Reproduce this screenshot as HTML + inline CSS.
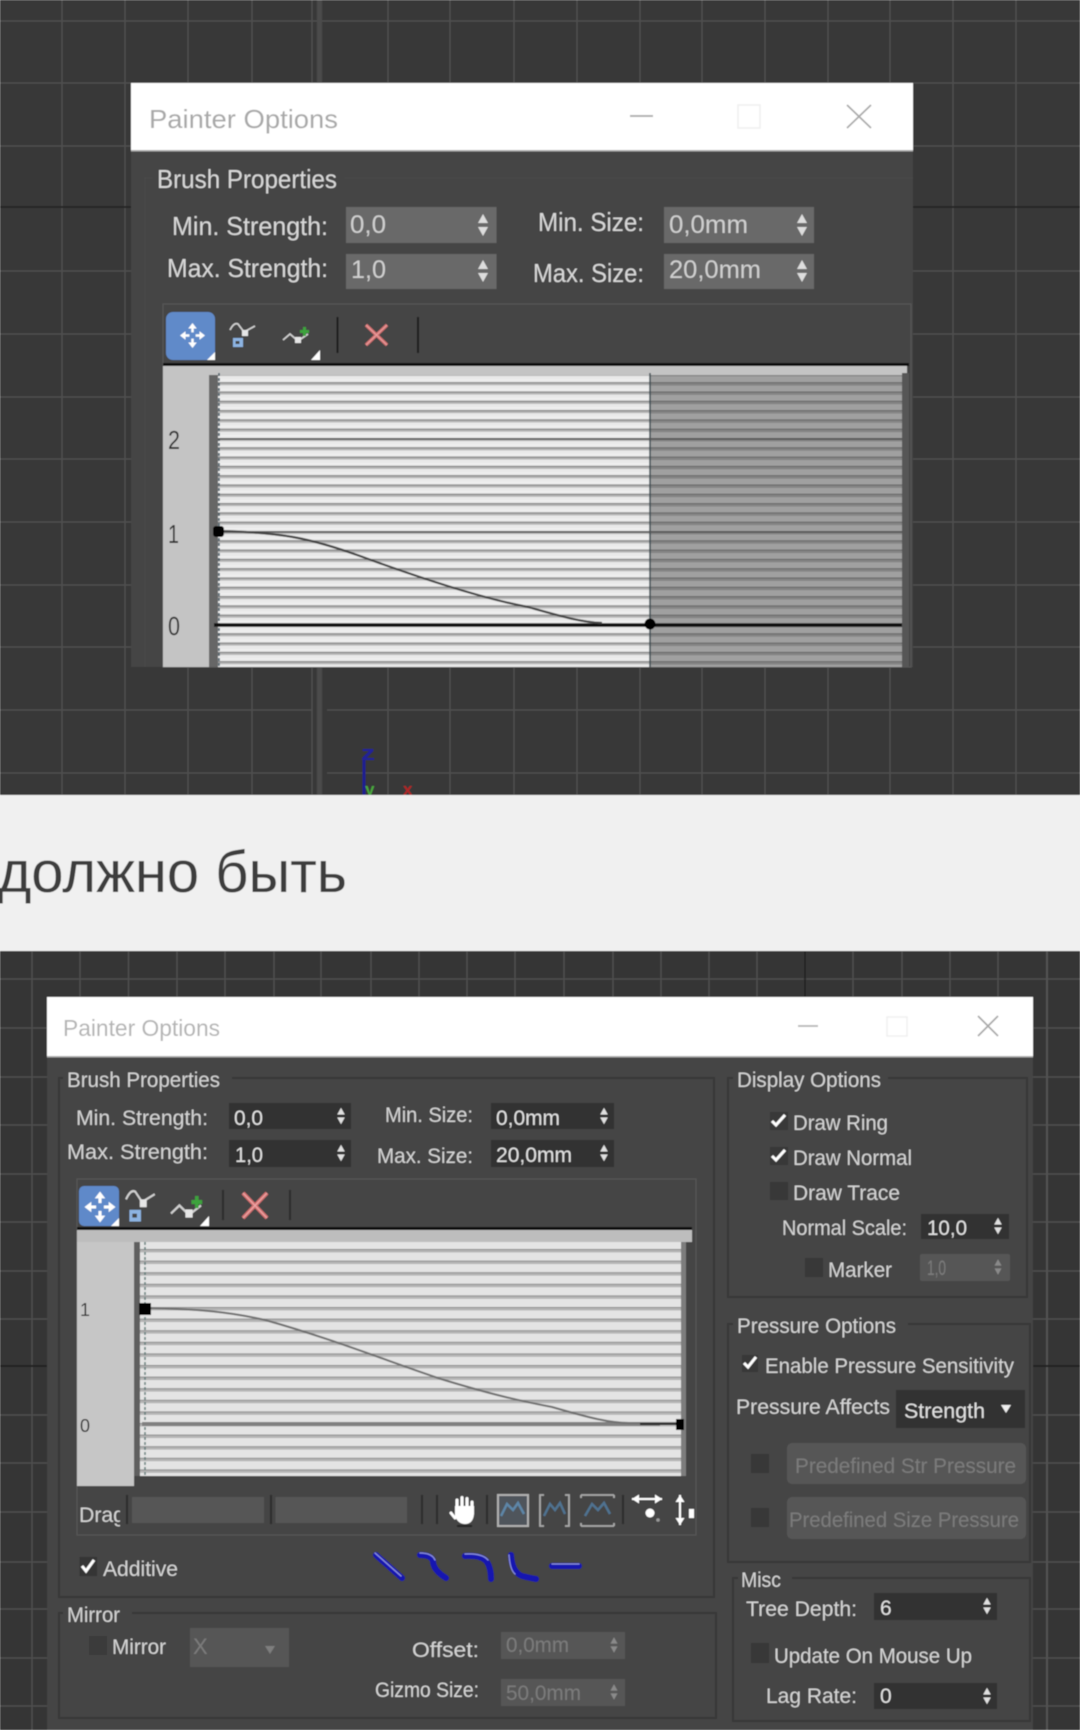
<!DOCTYPE html>
<html><head><meta charset="utf-8"><title>Painter Options</title>
<style>
html,body{margin:0;padding:0;background:#f0f0f0}
svg{display:block}
text{font-family:"Liberation Sans","DejaVu Sans",sans-serif}
.a{font-size:26px;fill:#d8d8d8}
.av{font-size:25px;fill:#d0d0d0}
.b{font-size:21px;fill:#d4d4d4}
.bv{font-size:21px;fill:#e2e2e2}
.d{font-size:21px;fill:#7c7c7c}
</style></head>
<body>
<svg xmlns="http://www.w3.org/2000/svg" width="1080" height="1730" viewBox="0 0 1080 1730">
<defs>
<filter id="bl" x="0" y="0" width="100%" height="100%"><feGaussianBlur stdDeviation="0.55"/></filter>
<pattern id="st1" patternUnits="userSpaceOnUse" x="0" y="624" width="10" height="9.3">
<rect width="10" height="9.3" fill="#e9e9e9"/><rect y="0" width="10" height="1.2" fill="#747474"/><rect y="1.2" width="10" height="1.8" fill="#b4b4b4"/><rect y="6.5" width="10" height="1" fill="#f2f2f2"/></pattern>
<pattern id="st2" patternUnits="userSpaceOnUse" x="0" y="624" width="10" height="9.3">
<rect width="10" height="9.3" fill="#a0a0a0"/><rect y="0" width="10" height="1.2" fill="#626262"/><rect y="1.2" width="10" height="2.2" fill="#848484"/></pattern>
<pattern id="st3" patternUnits="userSpaceOnUse" x="0" y="1423" width="10" height="11.6">
<rect width="10" height="11.6" fill="#e4e4e4"/><rect y="0" width="10" height="1.2" fill="#8a8a8a"/><rect y="1.2" width="10" height="2.2" fill="#b4b4b4"/></pattern>
<g id="sp"><path d="M0,-11 L-5,-2 H5 Z M0,11 L-5,2 H5 Z"/></g>
<path id="mv" fill="#fff" d="M0,-10 L-3.4,-5.6 H-1 V-2.5 H1 V-5.6 H3.4 Z M0,10 L-3.4,5.6 H-1 V2.5 H1 V5.6 H3.4 Z M-10,0 L-5.6,-3.4 V-1 H-2.5 V1 H-5.6 V3.4 Z M10,0 L5.6,-3.4 V-1 H2.5 V1 H5.6 V3.4 Z"/>
<g id="cv"><path d="M0,8 Q4,0 8,2 L14,10 L25,4" fill="none" stroke="#d0d0d0" stroke-width="1.7"/><rect x="12" y="8" width="6" height="6" fill="#e6e6e6"/><rect x="3" y="16" width="10" height="9" fill="#8db4e2"/><rect x="5.5" y="19" width="4" height="3" fill="#444"/></g>
<g id="ca"><path d="M0,13 L7,7 L15,14 L25,7" fill="none" stroke="#d0d0d0" stroke-width="1.7"/><rect x="12" y="10" width="6" height="6" fill="#e6e6e6"/><path d="M20,0 h3 v3 h3 v3 h-3 v3 h-3 v-3 h-3 v-3 h3 z" fill="#3ea33e"/></g>
</defs>
<g filter="url(#bl)">
<rect width="1080" height="1730" fill="#f0f0f0"/>

<!-- TOP VIEWPORT -->
<rect width="1080" height="795" fill="#373737"/>
<g stroke="#4f4f4f" stroke-width="1.6" fill="none">
<path d="M62,0V795M125,0V795M188,0V795M252,0V795M388,0V795M450,0V795M514,0V795M577,0V795M640,0V795M702,0V795M765,0V795M828,0V795M890,0V795M953,0V795M1016,0V795M312,0V795"/>
<path d="M0,21H1080M0,83H1080M0,146H1080M0,271H1080M0,334H1080M0,397H1080M0,459H1080M0,522H1080M0,585H1080M0,647H1080M0,710H312M327,710H1080M0,773H312M327,773H1080"/>
</g>
<path d="M319.500,0V795" stroke="#4c4c4c" stroke-width="5"/>
<path d="M0,207H1080" stroke="#252525" stroke-width="2"/>

<path d="M364,760V795" stroke="#1c1c90" stroke-width="3" fill="none"/>
<text x="361" y="760" font-size="20" font-weight="bold" fill="#22229a" textLength="14" lengthAdjust="spacingAndGlyphs">z</text>
<text x="365" y="795" font-size="17" font-weight="bold" fill="#4aa83e">y</text>
<text x="403" y="795" font-size="17" font-weight="bold" fill="#b32626">x</text>

<!-- top dialog -->
<rect x="131" y="83" width="782" height="584" fill="#444"/>
<rect x="131" y="83" width="782" height="68" fill="#fff"/>
<rect x="131" y="150" width="782" height="1.500" fill="#aaa"/>
<text x="149" y="128" font-size="26" fill="#a8a8a8" textLength="189" lengthAdjust="spacingAndGlyphs">Painter Options</text>
<path d="M630,116H653" stroke="#b0b0b0" stroke-width="2"/>
<rect x="738" y="105" width="22" height="23" fill="none" stroke="#efefef" stroke-width="1.500"/>
<path d="M847,105L871,128M871,105L847,128" stroke="#a8a8a8" stroke-width="1.700"/>
<path d="M145,667V178H152M345,178H913" stroke="#4a4a4a" stroke-width="1.500" fill="none"/>
<text x="157" y="188" class="a" textLength="180" lengthAdjust="spacingAndGlyphs">Brush Properties</text>
<text x="172" y="235" class="a" textLength="156" lengthAdjust="spacingAndGlyphs">Min. Strength:</text>
<text x="167" y="277" class="a" textLength="161" lengthAdjust="spacingAndGlyphs">Max. Strength:</text>
<text x="538" y="231" class="a" textLength="106" lengthAdjust="spacingAndGlyphs">Min. Size:</text>
<text x="533" y="282" class="a" textLength="111" lengthAdjust="spacingAndGlyphs">Max. Size:</text>
<rect x="346" y="207" width="150.500" height="36" fill="#696969"/>
<rect x="346" y="254" width="150.500" height="35" fill="#696969"/>
<rect x="664" y="207" width="150" height="36" fill="#696969"/>
<rect x="664" y="254" width="150" height="35" fill="#696969"/>
<text x="350" y="233" class="av" textLength="36" lengthAdjust="spacingAndGlyphs">0,0</text>
<text x="351" y="278" class="av" textLength="35" lengthAdjust="spacingAndGlyphs">1,0</text>
<text x="669" y="233" class="av" textLength="79" lengthAdjust="spacingAndGlyphs">0,0mm</text>
<text x="669" y="278" class="av" textLength="92" lengthAdjust="spacingAndGlyphs">20,0mm</text>
<use href="#sp" x="483" y="225" fill="#ddd"/><use href="#sp" x="483" y="271" fill="#ddd"/>
<use href="#sp" x="802" y="225" fill="#ddd"/><use href="#sp" x="802" y="271" fill="#ddd"/>

<!-- top toolbar -->
<rect x="163" y="304" width="748" height="363" fill="#454545" stroke="#555" stroke-width="1.500"/>
<rect x="166" y="312" width="49" height="48" rx="7" fill="#608ac9"/>
<use href="#mv" transform="translate(192.500,335.500) scale(1.25)"/>
<path d="M215,352V360H207Z" fill="#fff"/>
<use href="#cv" transform="translate(230,322)"/>
<use href="#ca" transform="translate(283,327)"/>
<path d="M320,350V360H311Z" fill="#fff"/>
<path d="M337.500,317V353M418,317V353" stroke="#1f1f1f" stroke-width="2"/>
<path d="M366,325L387,345M387,325L366,345" stroke="#d26f6f" stroke-width="3.500"/>
<path d="M366,325L387,345M387,325L366,345" stroke="#e8a0a0" stroke-width="1"/>

<!-- top graph -->
<rect x="163" y="363" width="746" height="3" fill="#0c0c0c"/>
<rect x="163" y="366" width="744" height="301" fill="#c4c4c4"/>
<rect x="209" y="373" width="698" height="294" fill="#666"/>
<rect x="218" y="373" width="432" height="294" fill="url(#st1)"/>
<rect x="650" y="373" width="252" height="294" fill="url(#st2)"/>
<rect x="902" y="373" width="7" height="294" fill="#565656"/>
<rect x="209" y="373" width="693" height="2" fill="#c4c4c4"/>
<path d="M219,373V667" stroke="#3f5560" stroke-width="1.500" stroke-dasharray="3 2"/>
<path d="M650,373V667" stroke="#3b4a50" stroke-width="1.500"/>
<path d="M218,439H902M218,532H902" stroke="#555" stroke-width="1.500"/>
<path d="M214,625H902" stroke="#0a0a0a" stroke-width="3.500"/>
<path d="M218,531 C280,532 310,538 360,556 C420,578 480,598 528,607 C560,616 580,622 602,623" fill="none" stroke="#444" stroke-width="2.200"/>
<rect x="213" y="526" width="11" height="11" rx="3" fill="#000"/>
<circle cx="650" cy="624" r="5.500" fill="#000"/>
<text x="168" y="449" font-size="26" fill="#333" textLength="12" lengthAdjust="spacingAndGlyphs">2</text>
<text x="168" y="543" font-size="26" fill="#333" textLength="11" lengthAdjust="spacingAndGlyphs">1</text>
<text x="168" y="635" font-size="26" fill="#333" textLength="12" lengthAdjust="spacingAndGlyphs">0</text>

<!-- BAND -->
<rect x="0" y="795" width="1080" height="156" fill="#f0f0f0"/>
<text x="347" y="892" font-size="58" fill="#3c3c3c" text-anchor="end">должно быть</text>

<!-- BOTTOM VIEWPORT -->
<rect y="951" width="1080" height="779" fill="#353535"/>
<g stroke="#4f4f4f" stroke-width="1.500" fill="none">
<path d="M32,951V1730M80,951V1730M128.500,951V1730M177,951V1730M225,951V1730M274,951V1730M321,951V1730M371,951V1730M419,951V1730M467,951V1730M515,951V1730M564,951V1730M613,951V1730M661,951V1730M709,951V1730M757,951V1730M853,951V1730M902,951V1730M950,951V1730M998,951V1730"/>
<path d="M0,979H1080M0,1028H1080M0,1077H1080M0,1125H1080M0,1174H1080M0,1222H1080M0,1271H1080M0,1319H1080M0,1415H1080M0,1463H1080M0,1512H1080M0,1562H1080M0,1609H1080M0,1658H1080M0,1706H1080"/>
</g>
<path d="M1047,951V1730" stroke="#525252" stroke-width="2"/>
<path d="M805,951V1000" stroke="#262626" stroke-width="2"/>
<path d="M0,1366H1080" stroke="#232323" stroke-width="2"/>

<!-- bottom dialog -->
<rect x="47" y="997" width="986" height="733" fill="#444"/>
<rect x="47" y="997" width="986" height="60" fill="#fff"/>
<rect x="47" y="1056" width="986" height="1.500" fill="#aaa"/>
<text x="63" y="1036" font-size="23" fill="#b4b4b4" textLength="157" lengthAdjust="spacingAndGlyphs">Painter Options</text>
<path d="M798,1026H818" stroke="#b4b4b4" stroke-width="1.800"/>
<rect x="887" y="1017" width="20" height="19" fill="none" stroke="#f0f0f0" stroke-width="1.500"/>
<path d="M978,1016L998,1036M998,1016L978,1036" stroke="#a8a8a8" stroke-width="1.700"/>

<!-- groups -->
<g fill="none" stroke="#383838" stroke-width="2">
<path d="M232,1078H714V1597H59V1078H63"/>
<path d="M132,1613H716V1718H59V1613H63"/>
<path d="M888,1078H1027V1297H728V1078H733"/>
<path d="M908,1324H1030V1562H728V1324H733"/>
<path d="M792,1578H1030V1721H733V1578H738"/>
</g>
<text x="67" y="1087" class="b" textLength="153" lengthAdjust="spacingAndGlyphs">Brush Properties</text>
<text x="76" y="1125" class="b" textLength="132" lengthAdjust="spacingAndGlyphs">Min. Strength:</text>
<text x="67" y="1159" class="b" textLength="141" lengthAdjust="spacingAndGlyphs">Max. Strength:</text>
<text x="385" y="1122" class="b" textLength="88" lengthAdjust="spacingAndGlyphs">Min. Size:</text>
<text x="377" y="1163" class="b" textLength="96" lengthAdjust="spacingAndGlyphs">Max. Size:</text>
<g fill="#323232">
<rect x="229" y="1103" width="122" height="26"/><rect x="229" y="1140" width="122" height="27"/>
<rect x="491" y="1103" width="123" height="26"/><rect x="491" y="1140" width="123" height="27"/>
<rect x="921" y="1214" width="88" height="25"/>
<rect x="874" y="1593" width="123" height="27"/><rect x="874" y="1683" width="123" height="26"/>
<rect x="896" y="1390" width="129" height="38"/>
</g>
<text x="234" y="1125" class="bv" textLength="29" lengthAdjust="spacingAndGlyphs">0,0</text>
<text x="235" y="1162" class="bv" textLength="28" lengthAdjust="spacingAndGlyphs">1,0</text>
<text x="496" y="1125" class="bv" textLength="64" lengthAdjust="spacingAndGlyphs">0,0mm</text>
<text x="496" y="1162" class="bv" textLength="76" lengthAdjust="spacingAndGlyphs">20,0mm</text>
<g fill="#e0e0e0">
<use href="#sp" transform="translate(341,1116) scale(.75)"/><use href="#sp" transform="translate(341,1153) scale(.75)"/>
<use href="#sp" transform="translate(604,1116) scale(.75)"/><use href="#sp" transform="translate(604,1153) scale(.75)"/>
<use href="#sp" transform="translate(998,1226) scale(.75)"/>
<use href="#sp" transform="translate(987,1606) scale(.75)"/><use href="#sp" transform="translate(987,1696) scale(.75)"/>
</g>

<!-- bottom toolbar -->
<rect x="77" y="1179" width="619" height="356" fill="#454545" stroke="#555" stroke-width="1.500"/>
<rect x="79" y="1186" width="40" height="40" rx="5" fill="#5f89c9"/>
<use href="#mv" transform="translate(100,1207) scale(1.55)"/>
<path d="M119,1218V1226H111Z" fill="#fff"/>
<use href="#cv" transform="translate(126,1189) scale(1.15,1.3)"/>
<use href="#ca" transform="translate(171,1196) scale(1.2,1.35)"/>
<path d="M209,1216V1226H200Z" fill="#fff"/>
<path d="M223,1190V1220M290,1190V1220" stroke="#2a2a2a" stroke-width="2"/>
<path d="M243,1193L267,1218M267,1193L243,1218" stroke="#d47070" stroke-width="4"/>
<path d="M243,1193L267,1218M267,1193L243,1218" stroke="#eba7a7" stroke-width="1.200"/>

<!-- bottom graph -->
<rect x="77" y="1227" width="615" height="3" fill="#111"/>
<rect x="77" y="1230" width="615" height="12" fill="#bdbdbd"/>
<rect x="77" y="1242" width="57" height="244" fill="#c6c6c6"/>
<rect x="134" y="1242" width="6" height="234" fill="#5e5e5e"/>
<rect x="140" y="1242" width="541" height="234" fill="url(#st3)"/>
<rect x="681" y="1242" width="5" height="234" fill="#7d7d7d"/>
<path d="M145,1242V1476" stroke="#5f7a78" stroke-width="1.500" stroke-dasharray="3 2"/>
<path d="M142,1424H660" stroke="#808080" stroke-width="4"/>
<path d="M146,1308 C200,1309 230,1312 265,1320 C330,1338 390,1362 441,1379 C490,1394 520,1401 552,1407 C590,1418 610,1423 629,1423 H680" fill="none" stroke="#6f6f6f" stroke-width="2"/>
<path d="M640,1424H680" stroke="#222" stroke-width="2"/>
<rect x="139" y="1303" width="12" height="12" fill="#000"/>
<rect x="676" y="1419" width="8" height="11" fill="#000"/>
<text x="80" y="1316" font-size="18" fill="#333">1</text>
<text x="80" y="1432" font-size="18" fill="#333">0</text>

<!-- status row -->
<svg x="79" y="1490" width="41" height="40" viewBox="79 1490 41 40"><text x="79" y="1522" font-size="21" fill="#d4d4d4" textLength="46" lengthAdjust="spacingAndGlyphs">Drag</text></svg>
<path d="M127,1495V1524M271,1495V1524M422,1495V1524M437,1495V1524M487,1495V1524M623,1495V1524" stroke="#2a2a2a" stroke-width="2"/>
<rect x="132" y="1497" width="132" height="26" fill="#565656"/>
<rect x="275.500" y="1497" width="131.500" height="26" fill="#565656"/>
<g stroke="#fff" stroke-linecap="round" fill="none" stroke-width="3">
<path d="M457,1507V1500M462,1506V1497.500M467,1506V1498.500M472,1509V1502M451,1513L455,1518"/>
</g>
<path d="M455,1506H474V1514Q473,1524 465,1524Q458,1524 455,1516Z" fill="#fff"/>
<path d="M457,1526H472" stroke="#222" stroke-width="2"/>
<rect x="498" y="1495" width="30" height="31" fill="#50555c" stroke="#b0b0b0" stroke-width="2"/>
<path d="M501,1516L507,1504L513,1510L518,1503L524,1514" fill="none" stroke="#5d86a8" stroke-width="2.500"/>
<path d="M544,1495H540V1526H544M565,1495H569V1526H565" fill="none" stroke="#aaa" stroke-width="1.800"/>
<path d="M544,1516L550,1504L555,1510L560,1503L565,1514" fill="none" stroke="#4f7290" stroke-width="2.500"/>
<path d="M581,1495H614M581,1526H614M581,1495V1498M614,1495V1498M581,1526V1523M614,1526V1523" fill="none" stroke="#aaa" stroke-width="1.800"/>
<path d="M585,1516L592,1504L598,1510L604,1503L610,1514" fill="none" stroke="#4f7290" stroke-width="2.500"/>
<path d="M632,1499H662" stroke="#fff" stroke-width="2"/>
<path d="M632,1499L639,1494.500V1503.500ZM662,1499L655,1494.500V1503.500Z" fill="#fff"/>
<circle cx="650" cy="1513" r="4.500" fill="#fff"/><circle cx="658" cy="1520" r="1.800" fill="#999"/>
<path d="M680,1495V1525" stroke="#fff" stroke-width="2"/>
<path d="M680,1495L675.500,1502H684.500ZM680,1525L675.500,1518H684.500Z" fill="#fff"/>
<rect x="689" y="1509" width="5" height="9" fill="#fff"/>

<!-- additive -->
<rect x="79.500" y="1557" width="17.500" height="19" fill="#363636"/>
<path d="M82,1566L86,1571L94,1560" fill="none" stroke="#fff" stroke-width="3"/>
<text x="103" y="1576" class="b" textLength="75" lengthAdjust="spacingAndGlyphs">Additive</text>
<g fill="none" stroke="#1616b0" stroke-width="6" stroke-linecap="round" stroke-linejoin="round">
<path d="M376,1555L402,1578"/>
<path d="M420,1555Q431,1555 433,1561Q433,1570 446,1578"/>
<path d="M465,1556Q482,1555 487,1562Q491,1568 491,1579"/>
<path d="M511,1555Q512,1572 522,1576Q530,1578 536,1579"/>
<path d="M552,1566H579"/>
</g>
<g fill="none" stroke="#8d93dc" stroke-width="1.200" stroke-linecap="round">
<path d="M375,1553L401,1576"/>
<path d="M420,1553Q432,1553 435,1560"/>
<path d="M465,1554Q482,1553 488,1560"/>
<path d="M509,1555Q510,1570 515,1574"/>
<path d="M552,1564H579"/>
</g>

<!-- mirror -->
<text x="67" y="1622" class="b" textLength="53" lengthAdjust="spacingAndGlyphs">Mirror</text>
<rect x="89" y="1636" width="18" height="19" fill="#3a3a3a"/>
<text x="112" y="1654" class="b" textLength="54" lengthAdjust="spacingAndGlyphs">Mirror</text>
<rect x="190" y="1628" width="99" height="39" fill="#565656"/>
<text x="193" y="1654" class="d" style="font-size:22px">X</text>
<path d="M265,1646H275L270,1654Z" fill="#7e7e7e"/>
<text x="412" y="1657" class="b" textLength="67" lengthAdjust="spacingAndGlyphs">Offset:</text>
<text x="375" y="1697" class="b" textLength="104" lengthAdjust="spacingAndGlyphs">Gizmo Size:</text>
<rect x="501" y="1632" width="124" height="27" fill="#565656"/>
<rect x="501" y="1679" width="124" height="27" fill="#565656"/>
<text x="506" y="1652" class="d" textLength="63" lengthAdjust="spacingAndGlyphs">0,0mm</text>
<text x="506" y="1700" class="d" textLength="75" lengthAdjust="spacingAndGlyphs">50,0mm</text>
<g fill="#8a8a8a"><use href="#sp" transform="translate(614,1645) scale(.7)"/><use href="#sp" transform="translate(614,1692) scale(.7)"/></g>

<!-- display options -->
<text x="737" y="1087" class="b" textLength="144" lengthAdjust="spacingAndGlyphs">Display Options</text>
<g fill="#383838">
<rect x="770" y="1112" width="18" height="18"/><rect x="770" y="1147" width="18" height="18"/><rect x="770" y="1182" width="18" height="18"/>
<rect x="805" y="1258" width="18" height="19"/>
<rect x="742" y="1355" width="16" height="17"/>
<rect x="751" y="1454" width="18" height="19"/><rect x="751" y="1508" width="18" height="19"/>
<rect x="751" y="1643" width="18" height="20"/>
</g>
<g fill="none" stroke="#fff" stroke-width="3">
<path d="M772,1121L776,1125L785,1115"/><path d="M772,1156L776,1160L785,1150"/><path d="M744,1363L748,1367L756,1357"/>
</g>
<text x="793" y="1130" class="b" textLength="95" lengthAdjust="spacingAndGlyphs">Draw Ring</text>
<text x="793" y="1165" class="b" textLength="119" lengthAdjust="spacingAndGlyphs">Draw Normal</text>
<text x="793" y="1200" class="b" textLength="107" lengthAdjust="spacingAndGlyphs">Draw Trace</text>
<text x="782" y="1235" class="b" textLength="125" lengthAdjust="spacingAndGlyphs">Normal Scale:</text>
<text x="927" y="1235" class="bv" textLength="40" lengthAdjust="spacingAndGlyphs">10,0</text>
<text x="828" y="1277" class="b" textLength="64" lengthAdjust="spacingAndGlyphs">Marker</text>
<rect x="920" y="1254" width="90" height="27" rx="2" fill="#565656"/>
<text x="927" y="1275" class="d" textLength="19" lengthAdjust="spacingAndGlyphs">1,0</text>
<use href="#sp" transform="translate(998,1267) scale(.7)" fill="#8a8a8a"/>

<!-- pressure -->
<text x="737" y="1333" class="b" textLength="159" lengthAdjust="spacingAndGlyphs">Pressure Options</text>
<text x="765" y="1373" class="b" textLength="249" lengthAdjust="spacingAndGlyphs">Enable Pressure Sensitivity</text>
<text x="736" y="1414" class="b" textLength="154" lengthAdjust="spacingAndGlyphs">Pressure Affects</text>
<text x="904" y="1418" class="bv" textLength="81" lengthAdjust="spacingAndGlyphs">Strength</text>
<path d="M1001,1405H1011L1006,1413Z" fill="#eee"/>
<rect x="787" y="1443" width="239" height="41" rx="5" fill="#575757"/>
<rect x="787" y="1497" width="239" height="42" rx="5" fill="#575757"/>
<text x="795" y="1473" class="d" textLength="221" lengthAdjust="spacingAndGlyphs">Predefined Str Pressure</text>
<text x="789" y="1527" class="d" textLength="230" lengthAdjust="spacingAndGlyphs">Predefined Size Pressure</text>

<!-- misc -->
<text x="741" y="1587" class="b" textLength="40" lengthAdjust="spacingAndGlyphs">Misc</text>
<text x="746" y="1616" class="b" textLength="111" lengthAdjust="spacingAndGlyphs">Tree Depth:</text>
<text x="880" y="1615" class="bv">6</text>
<text x="774" y="1663" class="b" textLength="198" lengthAdjust="spacingAndGlyphs">Update On Mouse Up</text>
<text x="766" y="1703" class="b" textLength="91" lengthAdjust="spacingAndGlyphs">Lag Rate:</text>
<text x="880" y="1703" class="bv">0</text>
</g>
</svg>
</body></html>
